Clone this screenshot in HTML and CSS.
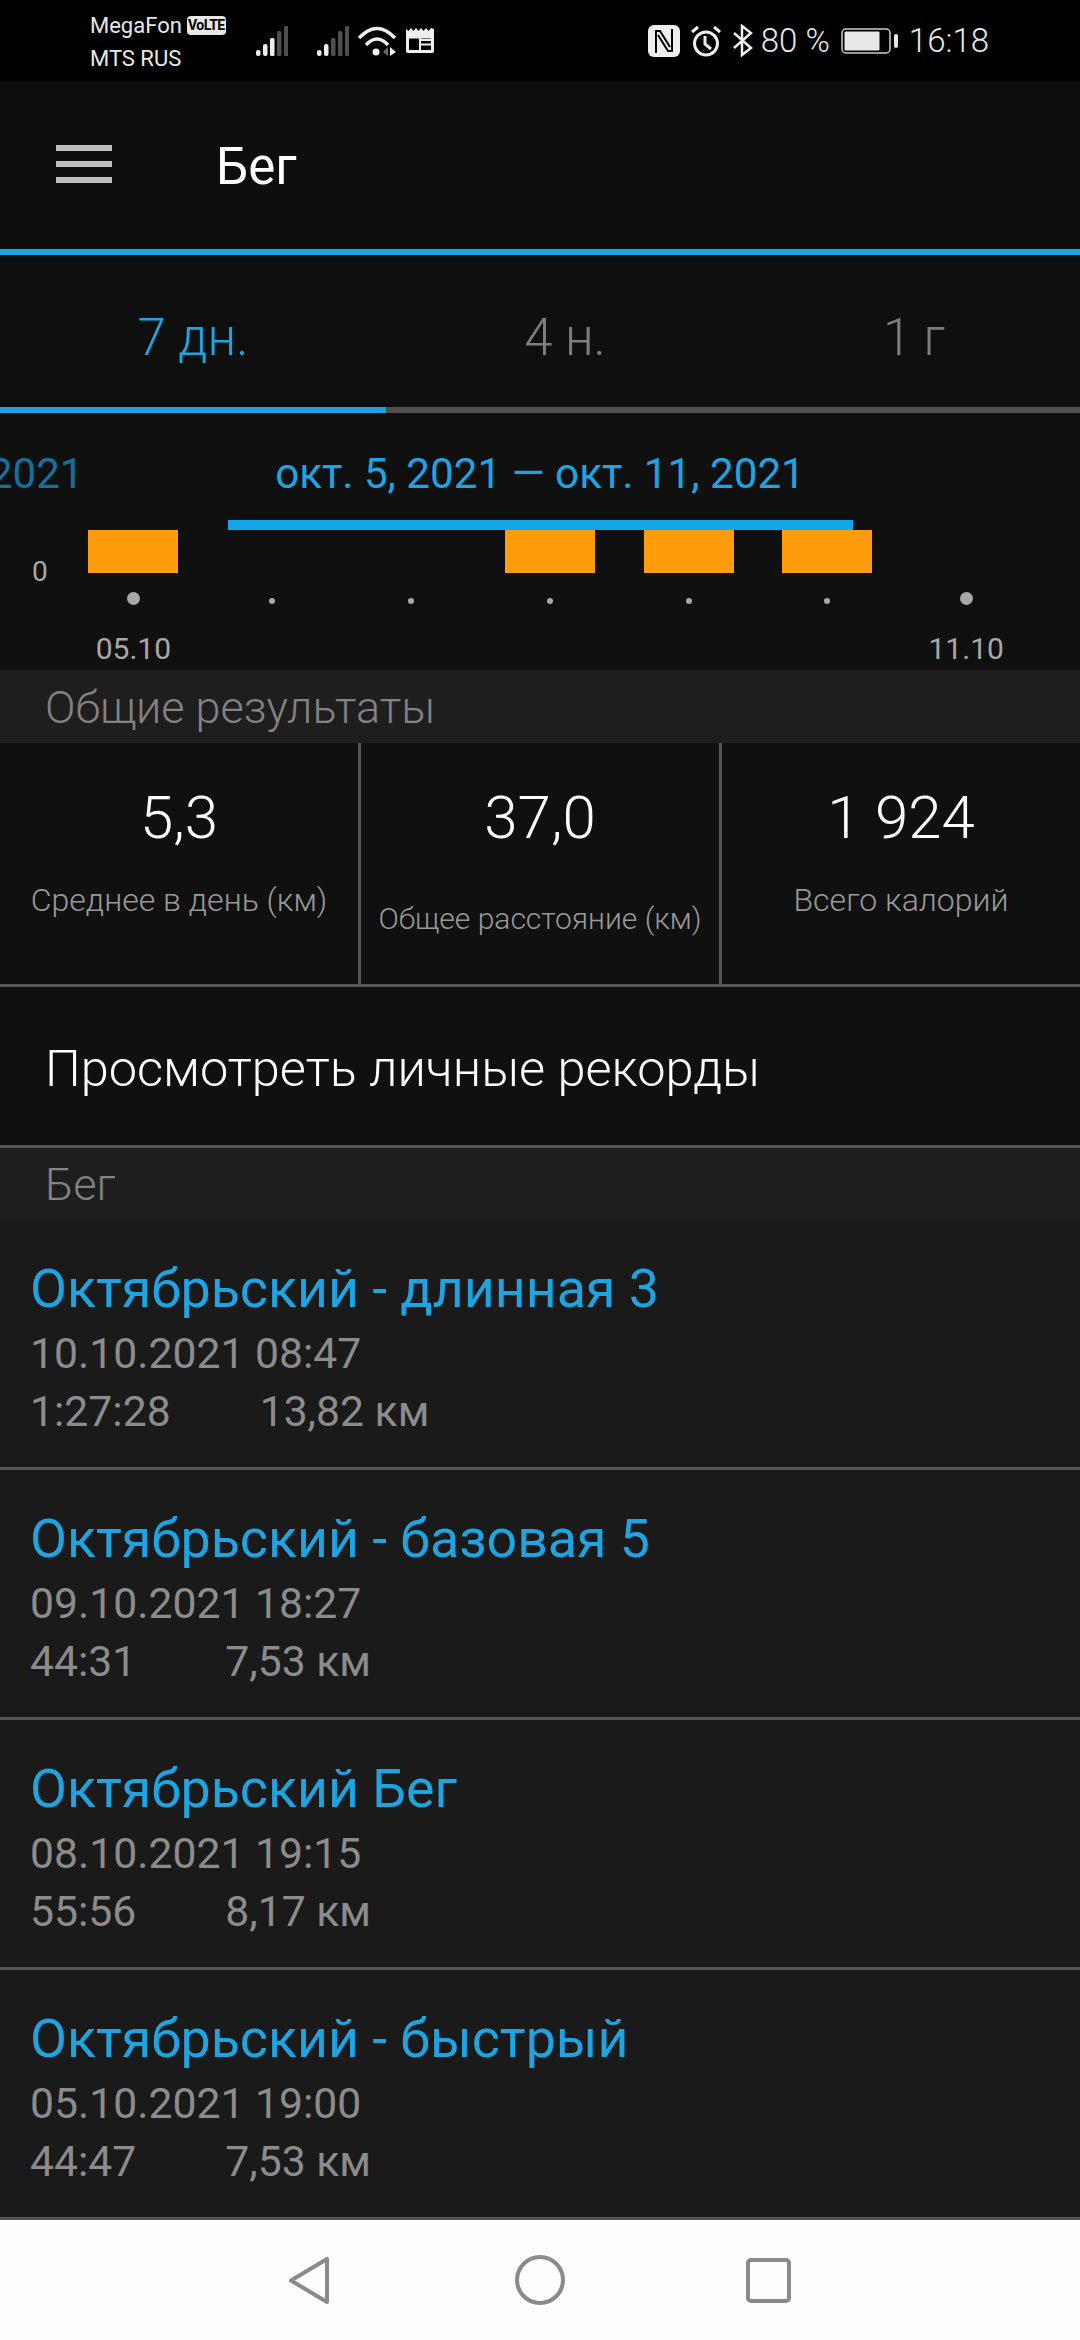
FILE: index.html
```html
<!DOCTYPE html>
<html lang="ru">
<head>
  <meta charset="UTF-8">
  <meta name="viewport" content="width=device-width, initial-scale=1">
  <title>Бег</title>
  <link rel="stylesheet" href="styles.css">
</head>
<body>
  <div class="statusbar">
    <div class="carriers">
      <div class="carrier">MegaFon <span class="volte">VoLTE</span></div>
      <div class="carrier">MTS RUS</div>
    </div>
    <svg class="signal" width="32" height="30" viewBox="0 0 32 30">
      <rect x="0" y="24" width="4.5" height="6" rx="2" fill="#eee"/>
      <rect x="7" y="18" width="4.5" height="12" rx="2" fill="#eee"/>
      <rect x="14" y="12" width="4.5" height="18" rx="1.5" fill="#eee"/>
      <rect x="21" y="5" width="4.5" height="25" rx="1.5" fill="#4f4f4f"/>
      <rect x="28" y="0" width="4.5" height="30" rx="1.5" fill="#4f4f4f"/>
    </svg>
    <svg class="signal signal-two" width="32" height="30" viewBox="0 0 32 30">
      <rect x="0" y="24" width="4.5" height="6" rx="2" fill="#eee"/>
      <rect x="7" y="18" width="4.5" height="12" rx="2" fill="#eee"/>
      <rect x="14" y="12" width="4.5" height="18" rx="1.5" fill="#4f4f4f"/>
      <rect x="21" y="5" width="4.5" height="25" rx="1.5" fill="#4f4f4f"/>
      <rect x="28" y="0" width="4.5" height="30" rx="1.5" fill="#4f4f4f"/>
    </svg>
    <svg class="wifi" width="38" height="30" viewBox="0 0 38 30" fill="none" stroke="#eee" stroke-width="3.5">
      <path d="M1 12 Q19 -7 37 12"/>
      <path d="M8 19 Q19 7 30 19"/>
      <circle cx="18" cy="26" r="3.5" fill="#eee" stroke="none"/>
      <path d="M25 26 L30 21 V30 Z" fill="#666" stroke="none"/>
      <path d="M32 21 L38 26 L32 30 Z" fill="#eee" stroke="none"/>
    </svg>
    <svg class="news" width="28" height="25" viewBox="0 0 28 25">
      <path d="M0 1 L2.5 3 L5 0 L7.5 3 L10 0 L12.5 3 L15 0 L17.5 3 L20 0 L22.5 3 L25 0 L28 1 V23 Q28 25 26 25 H2 Q0 25 0 23 Z" fill="#eee"/>
      <rect x="3" y="8" width="22" height="14" fill="#000"/>
      <rect x="13" y="8" width="2" height="14" fill="#eee"/>
      <rect x="15" y="11" width="10" height="2" fill="#eee"/>
      <rect x="15" y="15.5" width="10" height="2" fill="#eee"/>
      <rect x="3" y="8" width="22" height="2.5" fill="#eee"/>
    </svg>
    <div class="status-right">
      <svg width="32" height="32" viewBox="0 0 32 32">
        <rect width="32" height="32" rx="6" fill="#eee"/>
        <path d="M8 28 V6 H12 L22 22" fill="none" stroke="#000" stroke-width="2"/>
        <path d="M24 4 V26 H20 L10 10" fill="none" stroke="#000" stroke-width="2"/>
      </svg>
      <svg class="alarm" width="30" height="32" viewBox="0 0 30 32" fill="none" stroke="#eee" stroke-width="3">
        <circle cx="15" cy="18.5" r="11.5"/>
        <path d="M14 11 V19 L20 24"/>
        <path d="M1 7 L7 2"/>
        <path d="M29 7 L23 2"/>
      </svg>
      <svg class="bt" width="20" height="33" viewBox="0 0 20 33" fill="none" stroke="#eee" stroke-width="2.5">
        <path d="M1 9 L18 24 L9 31 V2 L18 9 L1 24"/>
      </svg>
      <span class="battery-text">80 %</span>
      <svg class="battery" width="57" height="26" viewBox="0 0 57 26">
        <rect x="1" y="1" width="48" height="24" rx="4" fill="none" stroke="#ccc" stroke-width="1.5"/>
        <rect x="3.5" y="3.5" width="35" height="19" rx="1" fill="#e8e8e8"/>
        <rect x="53" y="6" width="4" height="14" rx="2" fill="#e8e8e8"/>
      </svg>
      <span class="clock">16:18</span>
    </div>
  </div>

  <header class="toolbar">
    <div class="menu-icon"><span></span><span></span><span></span></div>
    <div class="toolbar-title">Бег</div>
  </header>

  <nav class="tabs">
    <div class="tab tab-active">7 дн.</div>
    <div class="tab tab-mid">4 н.</div>
    <div class="tab tab-last">1 г</div>
  </nav>
  <div class="tab-line"><div class="tab-line-fill"></div></div>

  <section class="chart">
    <div class="prev-range">2021</div>
    <div class="range">окт. 5, 2021 — окт. 11, 2021</div>
    <div class="range-bar"></div>
    <div class="plot">
      <div class="zero">0</div>
      <div class="bars">
        <div class="bar"></div><div></div><div></div><div class="bar"></div><div class="bar"></div><div class="bar"></div><div></div>
      </div>
      <div class="ticks">
        <i class="tick-big"></i><i></i><i></i><i></i><i></i><i></i><i class="tick-big"></i>
      </div>
      <div class="dates">
        <span>05.10</span><span></span><span></span><span></span><span></span><span></span><span>11.10</span>
      </div>
    </div>
  </section>

  <div class="section-head section-head-first">Общие результаты</div>
  <section class="totals">
    <div class="total">
      <div class="total-value">5,3</div>
      <div class="total-label">Среднее в день (км)</div>
    </div>
    <div class="total">
      <div class="total-value">37,0</div>
      <div class="total-label total-label-low">Общее расстояние (км)</div>
    </div>
    <div class="total">
      <div class="total-value">1 924</div>
      <div class="total-label">Всего калорий</div>
    </div>
  </section>

  <div class="records">Просмотреть личные рекорды</div>

  <div class="section-head section-head-run">Бег</div>
  <section class="activities">
    <div class="activity">
      <div class="activity-name">Октябрьский - длинная 3</div>
      <div class="activity-line">10.10.2021 08:47</div>
      <div class="activity-line"><span class="activity-time">1:27:28</span>13,82 км</div>
    </div>
    <div class="activity">
      <div class="activity-name">Октябрьский - базовая 5</div>
      <div class="activity-line">09.10.2021 18:27</div>
      <div class="activity-line"><span class="activity-time">44:31</span>7,53 км</div>
    </div>
    <div class="activity">
      <div class="activity-name">Октябрьский Бег</div>
      <div class="activity-line">08.10.2021 19:15</div>
      <div class="activity-line"><span class="activity-time">55:56</span>8,17 км</div>
    </div>
    <div class="activity">
      <div class="activity-name">Октябрьский - быстрый</div>
      <div class="activity-line">05.10.2021 19:00</div>
      <div class="activity-line"><span class="activity-time">44:47</span>7,53 км</div>
    </div>
  </section>

  <footer class="navbar">
    <svg width="42" height="49" viewBox="0 0 42 49" fill="none" stroke="#8a8a8a" stroke-width="4" stroke-linejoin="round">
      <path d="M39 3 V46 L3 24.5 Z"/>
    </svg>
    <svg class="nav-home" width="50" height="50" viewBox="0 0 50 50" fill="none" stroke="#8a8a8a" stroke-width="4">
      <circle cx="25" cy="25" r="23"/>
    </svg>
    <svg class="nav-recent" width="45" height="45" viewBox="0 0 45 45" fill="none" stroke="#8a8a8a" stroke-width="4">
      <rect x="2" y="2" width="41" height="41" rx="3"/>
    </svg>
  </footer>
</body>
</html>
```

FILE: styles.css
```css
* { box-sizing: border-box; }

html, body {
  margin: 0;
  height: 100%;
}

body {
  width: 1080px;
  height: 2340px;
  overflow: hidden;
  background: #1a1a1a;
  font-family: Roboto, "Liberation Sans", sans-serif;
  font-weight: 300;
  display: flex;
  flex-direction: column;
}

/* status bar */
.statusbar {
  height: 81px;
  background: #000;
  color: #e8e8e8;
  display: flex;
  align-items: center;
  padding-left: 90px;
  flex: none;
}

.carriers {
  width: 166px;
  font-size: 22px;
  font-weight: 400;
  line-height: 33px;
  margin-top: 3px;
}

.carrier {
  display: flex;
  align-items: center;
  gap: 5px;
  white-space: nowrap;
}

.volte {
  width: 39px;
  height: 19px;
  background: #e8e8e8;
  color: #000;
  font-size: 14px;
  font-weight: 700;
  line-height: 19px;
  letter-spacing: -0.5px;
  text-align: center;
  border-radius: 4px;
}

.signal-two { margin-left: 29px; }
.wifi { margin-left: 9px; }
.news { margin-left: 10px; }

.status-right {
  margin-left: auto;
  margin-right: 91px;
  display: flex;
  align-items: center;
  font-size: 33px;
  font-weight: 300;
}

.alarm { margin-left: 11px; }
.bt { margin-left: 12px; }
.battery-text { margin-left: 8px; }
.battery { margin-left: 11px; }
.clock { margin-left: 11px; }

/* toolbar */
.toolbar {
  height: 168px;
  background: #0e0e0e;
  display: flex;
  align-items: center;
  padding-left: 56px;
  flex: none;
}

.menu-icon {
  width: 56px;
  display: flex;
  flex-direction: column;
  gap: 10px;
  margin-top: -2px;
}

.menu-icon span {
  height: 6px;
  background: #bdbdbd;
}

.toolbar-title {
  margin-left: 104px;
  color: #fff;
  font-size: 51px;
  font-weight: 400;
  margin-top: 2px;
}

/* tabs */
.tabs {
  height: 158px;
  border-top: 6px solid #1fa4e2;
  background: #0f0f0f;
  display: grid;
  grid-template-columns: 386px 350px 344px;
  align-items: center;
  padding-top: 12px;
  flex: none;
}

.tab {
  font-size: 51px;
  color: #7d7d7d;
  text-align: center;
}

.tab-active { color: #1fa4e2; }
.tab-mid { padding-left: 8px; }
.tab-last { padding-left: 12px; }

.tab-line {
  height: 6px;
  background: #4e4e4e;
  flex: none;
}

.tab-line-fill {
  width: 386px;
  height: 6px;
  background: #1fa4e2;
}

/* chart */
.chart {
  position: relative;
  height: 257px;
  background: #101010;
  overflow: hidden;
  flex: none;
}

.prev-range {
  position: absolute;
  left: -11px;
  top: 36px;
  font-size: 42px;
  font-weight: 400;
  line-height: 50px;
  color: #17709c;
}

.range {
  text-align: center;
  color: #1fa4e2;
  font-size: 42.2px;
  font-weight: 400;
  line-height: 50px;
  padding-top: 36px;
  height: 107px;
}

.range-bar {
  width: 625px;
  height: 10px;
  margin-left: 228px;
  background: #13a6e8;
}

.plot {
  position: relative;
  padding-left: 64px;
}

.zero {
  position: absolute;
  left: 32px;
  top: 26px;
  font-size: 28px;
  font-weight: 400;
  line-height: 32px;
  color: #a8a8a8;
}

.bars, .ticks, .dates {
  display: grid;
  grid-template-columns: repeat(7, 138.8px);
}

.bars { height: 43px; }

.bar {
  width: 90px;
  height: 43px;
  justify-self: center;
  background: #ff9c0c;
}

.ticks {
  height: 50px;
  align-items: center;
  justify-items: center;
}

.ticks i {
  width: 6px;
  height: 6px;
  margin-top: 5px;
  border-radius: 50%;
  background: #a8a8a8;
}

.ticks i.tick-big {
  width: 13px;
  height: 13px;
  margin-top: 0;
}

.dates {
  margin-top: 9px;
  font-size: 30px;
  line-height: 34px;
  color: #a8a8a8;
  text-align: center;
  font-weight: 400;
}

/* section heads */
.section-head {
  background: #1e1e1e;
  color: #828282;
  font-size: 45px;
  padding-left: 45px;
  flex: none;
}

.section-head-first {
  height: 73px;
  line-height: 75px;
}

.section-head-run {
  height: 72px;
  line-height: 74px;
}

/* totals */
.totals {
  height: 244px;
  background: #101010;
  display: grid;
  grid-template-columns: 361px 361px 358px;
  border-bottom: 3px solid #555;
  flex: none;
}

.total {
  text-align: center;
  border-right: 3px solid #555;
}

.total:last-child { border-right: none; }

.total-value {
  color: #fff;
  font-size: 60px;
  line-height: 68px;
  padding-top: 41px;
}

.total-label {
  color: #9a9a9a;
  font-size: 32px;
  line-height: 40px;
  margin-top: 28px;
  white-space: nowrap;
}

.total-label-low {
  margin-top: 47px;
  font-size: 30px;
}

/* records link */
.records {
  height: 161px;
  background: #101010;
  border-bottom: 3px solid #555;
  color: #fff;
  font-size: 50.5px;
  line-height: 163px;
  padding-left: 45px;
  flex: none;
}

/* activity list */
.activities {
  flex: none;
}

.activity {
  height: 250px;
  background: #1a1a1a;
  border-bottom: 3px solid #555;
  padding: 36px 0 0 30px;
}

.activity-name {
  color: #1fa4e2;
  font-size: 53.7px;
  font-weight: 400;
  line-height: 66px;
  margin-bottom: 2px;
}

.activity-line {
  color: #8c8c8c;
  font-size: 42.7px;
  font-weight: 400;
  line-height: 58px;
}

.activity-time {
  display: inline-block;
  margin-right: 89px;
}

/* android nav */
.navbar {
  flex: 1;
  background: #fdfdfd;
  display: flex;
  align-items: center;
  padding-left: 288px;
}

.nav-home { margin-left: 185px; }
.nav-recent { margin-left: 181px; }
```
